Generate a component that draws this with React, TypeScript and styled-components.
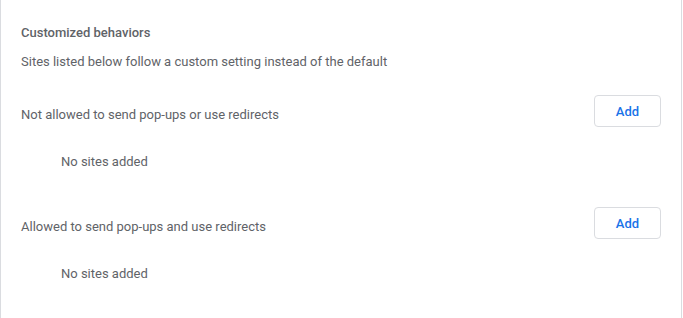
import styled, { createGlobalStyle } from 'styled-components';

const GlobalStyle = createGlobalStyle`
    html, body {
        margin: 0;
        padding: 0;
        background: #ffffff;
    }
    body {
        font-family: Roboto, 'Liberation Sans', Arial, sans-serif;
        -webkit-font-smoothing: antialiased;
    }
`;

const Card = styled.section`
    width: 682px;
    height: 318px;
    box-sizing: border-box;
    padding: 23px 20px 0;
    border-left: 1px solid #dadce0;
    border-right: 1px solid #dadce0;
    overflow: hidden;
    color: #5f6368;
    font-size: 13px;
`;

const Title = styled.h2`
    margin: 0;
    font-size: 13px;
    font-weight: 500;
    line-height: 20px;
    color: #5f6368;
`;

const Subtitle = styled.p`
    margin: 9px 0 0;
    line-height: 20px;
`;

const Block = styled.div<{ $first?: boolean }>`
    margin-top: ${(p) => (p.$first ? '23px' : '0')};
    padding-bottom: 35px;
`;

const Row = styled.div`
    display: flex;
    align-items: center;
    justify-content: space-between;
    height: 32px;
`;

const Label = styled.span`
    line-height: 20px;
    padding-top: 8px;
`;

const AddButton = styled.button`
    width: 67px;
    height: 32px;
    box-sizing: border-box;
    border: 1px solid #dadce0;
    border-radius: 4px;
    background: #ffffff;
    color: #1a73e8;
    font-family: inherit;
    font-size: 13px;
    font-weight: 500;
    cursor: pointer;
`;

const Empty = styled.div`
    margin-top: 25px;
    padding-left: 40px;
    line-height: 20px;
`;

const lists = [
    'Not allowed to send pop-ups or use redirects',
    'Allowed to send pop-ups and use redirects',
];

const App = () => {
    return (
        <>
            <GlobalStyle />
            <Card>
                <Title>Customized behaviors</Title>
                <Subtitle>Sites listed below follow a custom setting instead of the default</Subtitle>
                {lists.map((label, i) => (
                    <Block key={label} $first={i === 0}>
                        <Row>
                            <Label>{label}</Label>
                            <AddButton>Add</AddButton>
                        </Row>
                        <Empty>No sites added</Empty>
                    </Block>
                ))}
            </Card>
        </>
    );
};
export default App;
